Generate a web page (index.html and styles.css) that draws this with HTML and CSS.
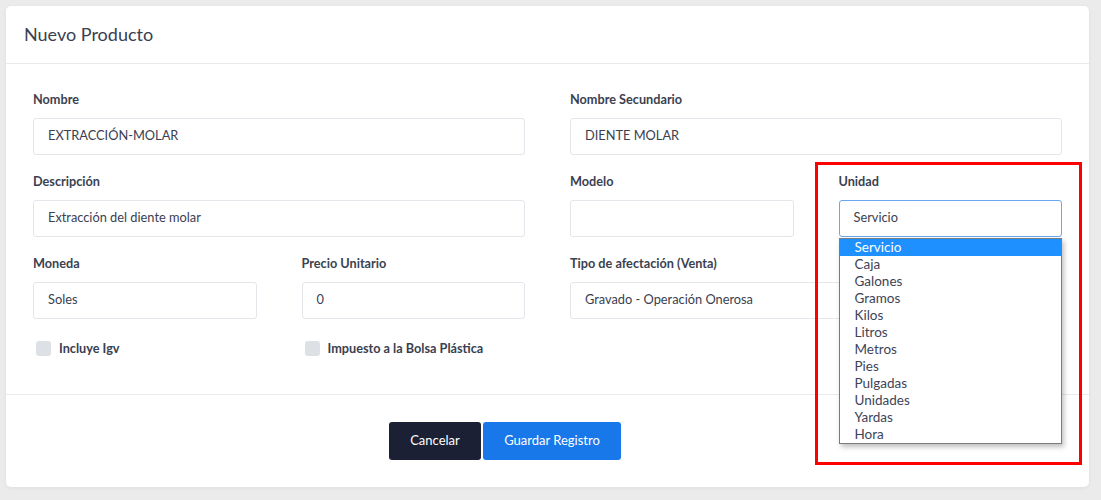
FILE: index.html
```html
<!DOCTYPE html>
<html lang="es">
<head>
<meta charset="utf-8">
<title>Nuevo Producto</title>
<link rel="stylesheet" href="styles.css">
</head>
<body>
<div class="card">
  <div class="card-header">Nuevo Producto</div>
  <div class="card-body">
    <div class="grid">
      <div class="field span2">
        <label class="lbl">Nombre</label>
        <div class="control">EXTRACCIÓN-MOLAR</div>
      </div>
      <div class="field span2">
        <label class="lbl">Nombre Secundario</label>
        <div class="control">DIENTE MOLAR</div>
      </div>
      <div class="field span2">
        <label class="lbl">Descripción</label>
        <div class="control">Extracción del diente molar</div>
      </div>
      <div class="field">
        <label class="lbl">Modelo</label>
        <div class="control"></div>
      </div>
      <div class="field unidad">
        <label class="lbl">Unidad</label>
        <div class="control focus">Servicio</div>
        <ul class="dropdown">
          <li class="sel">Servicio</li>
          <li>Caja</li>
          <li>Galones</li>
          <li>Gramos</li>
          <li>Kilos</li>
          <li>Litros</li>
          <li>Metros</li>
          <li>Pies</li>
          <li>Pulgadas</li>
          <li>Unidades</li>
          <li>Yardas</li>
          <li>Hora</li>
        </ul>
      </div>
      <div class="field">
        <label class="lbl">Moneda</label>
        <div class="control">Soles</div>
      </div>
      <div class="field">
        <label class="lbl">Precio Unitario</label>
        <div class="control">0</div>
      </div>
      <div class="field span2">
        <label class="lbl">Tipo de afectación (Venta)</label>
        <div class="control">Gravado - Operación Onerosa</div>
      </div>
      <div class="check"><span class="box"></span><span>Incluye Igv</span></div>
      <div class="check"><span class="box"></span><span>Impuesto a la Bolsa Plástica</span></div>
    </div>
  </div>
  <div class="card-footer">
    <button class="btn btn-dark">Cancelar</button>
    <button class="btn btn-blue">Guardar Registro</button>
  </div>
</div>
<div class="highlight"></div>
</body>
</html>
```
FILE: styles.css
```css
* { box-sizing: border-box; }
html, body { margin: 0; }
body {
  position: relative;
  background: #ebebeb;
  font-family: Lato, "Open Sans", "Liberation Sans", sans-serif;
  color: #3a4050;
  padding: 6px 12px 0 6px;
  height: 500px;
  overflow: hidden;
}
.card {
  background: #fff;
  border-radius: 5px;
  height: 481px;
  box-shadow: 0 1px 4px rgba(0,0,0,0.06);
}
.card-header {
  height: 58px;
  border-bottom: 1px solid #e8eaed;
  padding: 0 18px;
  display: flex;
  align-items: center;
  font-size: 18px;
  color: #3a4050;
  padding-bottom: 2px;
}
.card-body {
  padding: 27px 27px 38px;
  border-bottom: 1px solid #e8eaed;
}
.grid {
  display: grid;
  grid-template-columns: repeat(4, 1fr);
  column-gap: 45px;
  row-gap: 18px;
}
.span2 { grid-column: span 2; }
.field { display: flex; flex-direction: column; }
.unidad { position: relative; }
.lbl {
  font-size: 12.7px;
  font-weight: 700;
  line-height: 16px;
  margin-bottom: 11px;
  color: #3b4150;
}
.control {
  height: 37px;
  border: 1px solid #e3e6ea;
  border-radius: 3px;
  padding: 0 14px 4px;
  display: flex;
  align-items: center;
  font-size: 12.8px;
  color: #3a4050;
}
.control.focus { border-color: #6aa7ee; }
.dropdown {
  position: absolute;
  left: 0;
  top: 65px;
  width: 223px;
  margin: 0;
  padding: 0;
  list-style: none;
  background: #fff;
  border: 1px solid #7b7b7b;
  box-shadow: 2px 3px 5px rgba(0,0,0,0.25);
  z-index: 2;
}
.dropdown li {
  height: 17px;
  line-height: 17px;
  font-size: 13.5px;
  padding-left: 15px;
  color: #3d4458;
}
.dropdown li.sel { background: #1e90ff; color: #fff; }
.check {
  display: flex;
  align-items: center;
  gap: 8px;
  padding-left: 3px;
  margin-top: 3px;
  font-size: 12.7px;
  font-weight: 700;
  line-height: 16px;
}
.box {
  width: 15px;
  height: 15px;
  border-radius: 3px;
  background: #dde0e5;
}
.card-footer {
  display: flex;
  justify-content: center;
  gap: 2px;
  padding: 27px 85px 0 0;
}
.btn {
  height: 38px;
  border: 0;
  border-radius: 3px;
  color: #fff;
  font-family: Lato, "Open Sans", "Liberation Sans", sans-serif;
  font-size: 13px;
  padding: 0 0 2px;
}
.btn-dark { background: #1b2034; width: 92px; }
.btn-blue { background: #1877e9; width: 138px; }
.highlight {
  position: absolute;
  left: 815px;
  top: 162px;
  width: 267px;
  height: 303px;
  border: 3px solid #ff0000;
  z-index: 3;
}
```
